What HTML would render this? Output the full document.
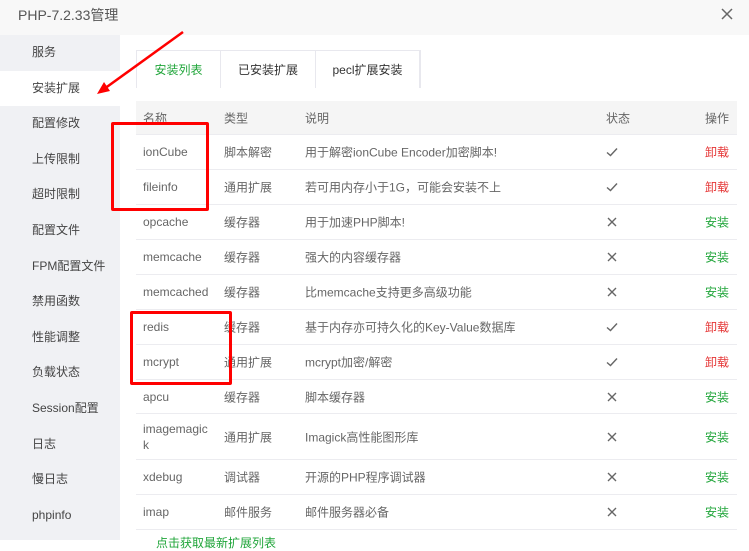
<!DOCTYPE html>
<html><head><meta charset="utf-8"><style>
*{margin:0;padding:0;box-sizing:border-box}
body{width:749px;height:540px;overflow:hidden;background:#fff;font-family:"Liberation Sans","Noto Sans CJK SC",sans-serif;font-size:12px;color:#666;position:relative}
.title{position:absolute;left:0;top:0;width:749px;height:35px;background:#f8f8f8;font-size:14px;color:#555;line-height:30px;padding-left:18px}
.side{position:absolute;left:0;top:35px;width:120px;height:505px;background:#f0f1f4}
.side div{height:35.6px;line-height:35.6px;padding-left:32px;color:#444;font-size:12px}
.side .on{background:#fff}
.tabs{position:absolute;left:136px;top:50px;height:38px;border:1px solid #e8e8ee;border-bottom:none;display:flex}
.tabs div{line-height:38px;text-align:center;border-right:1px solid #e8e8ee;color:#333}
.tabs .on{color:#20a53a}
.row{position:absolute;left:136px;width:601px;border-bottom:1px solid #ececf0}
.row span{position:absolute;top:50%;transform:translateY(-50%)}
.row span svg{display:block}
.c1{left:7px}.c2{left:88px}.c3{left:169px}.c4{left:470px}.c5{left:569px}
.hd{background:#f5f5f5;color:#666}
.red{color:#e53535}.grn{color:#20a53a}
.box{position:absolute;border:3px solid #f00;border-radius:2px}
</style></head><body>
<div class="title">PHP-7.2.33管理</div>
<svg style="position:absolute;left:719px;top:6px" width="16" height="16"><path d="M3 3L13 13M13 3L3 13" stroke="#666" stroke-width="1.5"/></svg>
<svg width="0" height="0" style="position:absolute"><defs>
<symbol id="ok" viewBox="0 0 12 12"><path d="M1 6.5L4.5 9.5L11 2.5" fill="none" stroke="#666" stroke-width="1.4"/></symbol>
<symbol id="no" viewBox="0 0 12 12"><path d="M2 2L10 10M10 2L2 10" fill="none" stroke="#666" stroke-width="1.4"/></symbol>
</defs></svg>
<div class="side">
<div>服务</div><div class="on">安装扩展</div><div>配置修改</div><div>上传限制</div><div>超时限制</div><div>配置文件</div><div>FPM配置文件</div><div>禁用函数</div><div>性能调整</div><div>负载状态</div><div>Session配置</div><div>日志</div><div>慢日志</div><div>phpinfo</div>
</div>
<div class="tabs"><div class="on" style="width:84px">安装列表</div><div style="width:95px">已安装扩展</div><div style="width:104px">pecl扩展安装</div></div>

<div class="row hd" style="top:101px;height:34px"><span class="c1">名称</span><span class="c2">类型</span><span class="c3">说明</span><span class="c4">状态</span><span class="c5">操作</span></div>
<div class="row" style="top:135px;height:35px"><span class="c1">ionCube</span><span class="c2">脚本解密</span><span class="c3">用于解密ionCube Encoder加密脚本!</span><span class="c4"><svg width="12" height="12"><use href="#ok"/></svg></span><span class="c5 red">卸载</span></div>
<div class="row" style="top:170px;height:35px"><span class="c1">fileinfo</span><span class="c2">通用扩展</span><span class="c3">若可用内存小于1G，可能会安装不上</span><span class="c4"><svg width="12" height="12"><use href="#ok"/></svg></span><span class="c5 red">卸载</span></div>
<div class="row" style="top:205px;height:35px"><span class="c1">opcache</span><span class="c2">缓存器</span><span class="c3">用于加速PHP脚本!</span><span class="c4"><svg width="12" height="12"><use href="#no"/></svg></span><span class="c5 grn">安装</span></div>
<div class="row" style="top:240px;height:35px"><span class="c1">memcache</span><span class="c2">缓存器</span><span class="c3">强大的内容缓存器</span><span class="c4"><svg width="12" height="12"><use href="#no"/></svg></span><span class="c5 grn">安装</span></div>
<div class="row" style="top:275px;height:35px"><span class="c1">memcached</span><span class="c2">缓存器</span><span class="c3">比memcache支持更多高级功能</span><span class="c4"><svg width="12" height="12"><use href="#no"/></svg></span><span class="c5 grn">安装</span></div>
<div class="row" style="top:310px;height:35px"><span class="c1">redis</span><span class="c2">缓存器</span><span class="c3">基于内存亦可持久化的Key-Value数据库</span><span class="c4"><svg width="12" height="12"><use href="#ok"/></svg></span><span class="c5 red">卸载</span></div>
<div class="row" style="top:345px;height:35px"><span class="c1">mcrypt</span><span class="c2">通用扩展</span><span class="c3">mcrypt加密/解密</span><span class="c4"><svg width="12" height="12"><use href="#ok"/></svg></span><span class="c5 red">卸载</span></div>
<div class="row" style="top:380px;height:34px"><span class="c1">apcu</span><span class="c2">缓存器</span><span class="c3">脚本缓存器</span><span class="c4"><svg width="12" height="12"><use href="#no"/></svg></span><span class="c5 grn">安装</span></div>
<div class="row" style="top:414px;height:46px"><span class="c1" style="line-height:16px">imagemagic<br>k</span><span class="c2">通用扩展</span><span class="c3">Imagick高性能图形库</span><span class="c4"><svg width="12" height="12"><use href="#no"/></svg></span><span class="c5 grn">安装</span></div>
<div class="row" style="top:460px;height:35px"><span class="c1">xdebug</span><span class="c2">调试器</span><span class="c3">开源的PHP程序调试器</span><span class="c4"><svg width="12" height="12"><use href="#no"/></svg></span><span class="c5 grn">安装</span></div>
<div class="row" style="top:495px;height:35px"><span class="c1">imap</span><span class="c2">邮件服务</span><span class="c3">邮件服务器必备</span><span class="c4"><svg width="12" height="12"><use href="#no"/></svg></span><span class="c5 grn">安装</span></div>
<div style="position:absolute;left:156px;top:534px;color:#20a53a">点击获取最新扩展列表</div>

<div class="box" style="left:111px;top:122px;width:98px;height:89px"></div>
<div class="box" style="left:130px;top:311px;width:102px;height:74px"></div>
<svg style="position:absolute;left:0;top:0" width="749" height="540"><path d="M183 32L104 89" stroke="#f00" stroke-width="2.5"/><path d="M97 94L104 82L110 91Z" fill="#f00"/></svg>
</body></html>
